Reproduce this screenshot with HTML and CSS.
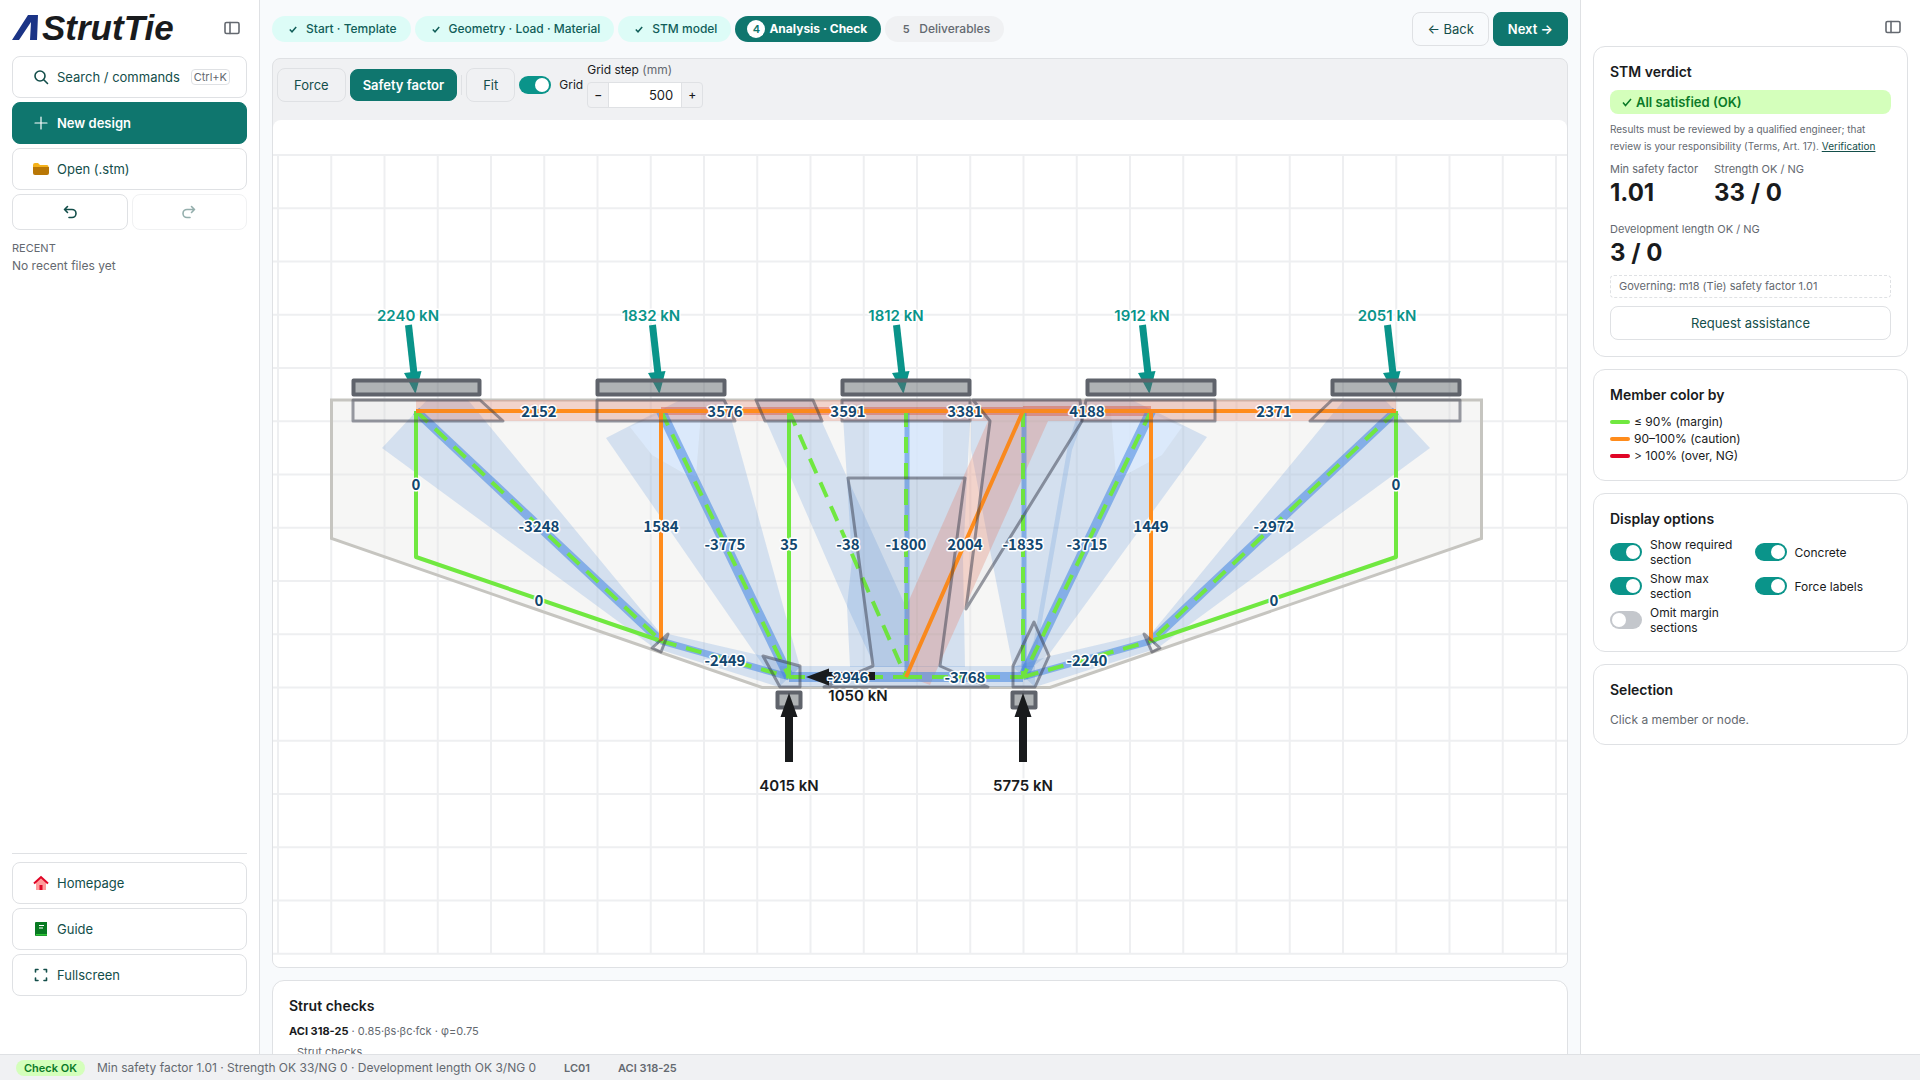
FILE: index.html
```html
<!DOCTYPE html>
<html lang="en">
<head>
<meta charset="utf-8">
<meta name="viewport" content="width=device-width, initial-scale=1">
<title>AStrutTie</title>
<link rel="stylesheet" href="styles.css">
</head>
<body>
<div class="app">
  <aside class="sidebar">
    <div class="brand">
      <svg class="logo" width="172" height="40" viewBox="0 -4 172 40" role="img" aria-label="AStrutTie">
        <path d="M0 28 16 3h10l-1 25h-7l1-18L7 28z" fill="#1b3486"/>
        <text x="30" y="28" class="logo-text">StrutTie</text>
      </svg>
      <button class="icon-btn" aria-label="Collapse sidebar">
        <svg width="16" height="14" viewBox="0 0 16 14"><rect x="1" y="1.500" width="14" height="11" rx="1.500"/><path d="M6 1.500v11"/></svg>
      </button>
    </div>
    <nav class="side-nav">
      <button class="btn side-btn"><svg class="ico" width="16" height="16" viewBox="0 0 16 16"><circle cx="7" cy="7" r="5"/><path d="m11 11 3.500 3.500"/></svg>Search / commands<kbd>Ctrl+K</kbd></button>
      <button class="btn side-btn primary"><svg class="ico thin" width="16" height="16" viewBox="0 0 16 16"><path d="M8 2v12M2 8h12"/></svg>New design</button>
      <button class="btn side-btn"><svg width="16" height="16" viewBox="0 0 16 16"><path d="M0 4q0-2 2-2h3l2 2h7q1.500 0 1.500 1.500V7H0z" fill="#f5b21b"/><path d="M0 6h16v6q0 2-2 2H2q-2 0-2-2z" fill="#b97706"/></svg>Open (.stm)</button>
      <div class="history">
        <button class="btn" aria-label="Undo"><svg class="ico" width="14" height="14" viewBox="0 0 14 14"><path d="M4.500 1.500 1.500 4.500l3 3M1.500 4.500H9a4 4 0 0 1 0 8H6"/></svg></button>
        <button class="btn" aria-label="Redo" disabled><svg class="ico" width="14" height="14" viewBox="0 0 14 14"><path d="m9.500 1.500 3 3-3 3M12.500 4.500H5a4 4 0 0 0 0 8h3"/></svg></button>
      </div>
    </nav>
    <div class="recent"><h2>RECENT</h2><p>No recent files yet</p></div>
    <nav class="side-nav side-foot">
      <a class="btn side-btn" href="#home"><svg width="16" height="16" viewBox="0 0 16 16"><path d="M3 7l5-5 5 5v8H3z" fill="#ff9c9c"/><path d="M1 8.500 8 2l7 6.500" fill="none" stroke="#e00526" stroke-width="2"/><path d="M6.500 10h3v5h-3z" fill="#e00526"/></svg>Homepage</a>
      <a class="btn side-btn" href="#guide"><svg width="16" height="16" viewBox="0 0 16 16"><path d="M2 2q0-1 1-1h11v14H3q-1 0-1-1z" fill="#087a22"/><path d="M3 13h11v1.500H3z" fill="#2fc437"/><path d="M6 4.500h5M6 7h4" stroke="#fff" stroke-width="1.200"/></svg>Guide</a>
      <button class="btn side-btn"><svg class="ico" width="16" height="16" viewBox="0 0 16 16"><path d="M2.500 5V2.500H5M11 2.500h2.500V5M13.500 11v2.500H11M5 13.500H2.500V11"/></svg>Fullscreen</button>
    </nav>
  </aside>

  <main class="main">
    <header class="topbar">
      <ol class="steps">
        <li class="done"><span><svg width="8" height="7" viewBox="0 0 8 7"><path d="M.8 3.500 3 5.800 7.200 1"/></svg></span>Start · Template</li>
        <li class="done"><span><svg width="8" height="7" viewBox="0 0 8 7"><path d="M.8 3.500 3 5.800 7.200 1"/></svg></span>Geometry · Load · Material</li>
        <li class="done"><span><svg width="8" height="7" viewBox="0 0 8 7"><path d="M.8 3.500 3 5.800 7.200 1"/></svg></span>STM model</li>
        <li class="current" aria-current="step"><span>4</span>Analysis · Check</li>
        <li><span>5</span>Deliverables</li>
      </ol>
      <div class="pager"><button class="btn">← Back</button><button class="btn primary">Next →</button></div>
    </header>

    <section class="viewer">
      <div class="toolbar">
        <button class="btn">Force</button>
        <button class="btn primary">Safety factor</button>
        <span class="divider"></span>
        <button class="btn">Fit</button>
        <label class="switch"><input type="checkbox" checked>Grid</label>
        <div class="grid-step">
          <label for="step">Grid step <span>(mm)</span></label>
          <div class="stepper"><button aria-label="Decrease">−</button><input id="step" type="text" value="500"><button aria-label="Increase">+</button></div>
        </div>
      </div>
      <div class="canvas">
      <svg class="drawing" viewBox="273 120 1294 847" role="img" aria-label="Strut and tie model">
        <defs>
          <g id="load"><path d="M408.500 325 414 374" stroke="#0a948a" stroke-width="7"/><path d="M404 373 421.500 371 415.500 394z" fill="#0a948a"/></g>
          <g id="reaction"><path d="M789 762V714" stroke="#191b1d" stroke-width="8"/><path d="M789 693 780.500 717h17z" fill="#191b1d"/></g>
        </defs>
        <path class="grid-line" d="M273 155H1567M273 208.250H1567M273 261.500H1567M273 314.750H1567M273 368H1567M273 421.250H1567M273 474.500H1567M273 527.750H1567M273 581H1567M273 634.250H1567M273 687.500H1567M273 740.750H1567M273 794H1567M273 847.250H1567M273 900.500H1567M273 953.750H1567"/>
        <path class="grid-line" d="M278 155V954M331.250 155V954M384.500 155V954M437.750 155V954M491 155V954M544.250 155V954M597.500 155V954M650.750 155V954M704 155V954M757.250 155V954M810.500 155V954M863.750 155V954M917 155V954M970.250 155V954M1023.500 155V954M1076.750 155V954M1130 155V954M1183.250 155V954M1236.500 155V954M1289.750 155V954M1343 155V954M1396.250 155V954M1449.500 155V954M1502.750 155V954M1556 155V954"/>
        <path class="concrete" d="M331.500 400H1481.500V538.500L1050 687.500H762L331.500 538.500z"/>

        <g class="strut-max">
          <path d="M382 448 427 400H468L662 635 653 647z"/>
          <path d="M606 438 680 400H726L800 667 789 680 765 668z"/>
          <path d="M757 400H812L906 607V667H875L847 606z"/>
          <path d="M842 400H971L963 560 965 667H850L847 606 852 560z"/>
          <path d="M971 400H1082V423L1072 450 1034 667H1013L988 540 971 450z"/>
          <path d="M1082 400H1132L1207 437 1050 653 1020 677 1034 640 1068 445z"/>
          <path d="M1430 448 1385 400H1344L1150 635 1159 647z"/>
          <path d="M668 634 763 656 800 667 779 687 661 650z"/>
          <path d="M1144 634 1050 656 1013 667 1035 687 1152 650z"/>
          <path d="M780 666H1035V687H780z"/>
        </g>
        <g class="node-light">
          <path d="M630 427 661 413H701L696 476 685 474 652 455z"/>
          <path d="M869 421H943V477H869z"/>
          <path d="M1182 427 1151 413H1111L1116 476 1127 474 1162 455z"/>
        </g>
        <g class="tie-max">
          <path d="M416 400H1396V421H416z"/>
          <path d="M906 607 988 421H1048L930 685 906 676z"/>
        </g>
        <path class="tie-need" d="M661 407H1023V415H661zM1023 406H1151V416H1023z"/>
        <g class="strut-need">
          <path d="M416 411 661 641M1396 411 1151 641" stroke-width="9"/>
          <path d="M661 411 789 677M1151 411 1023 677M789 677H1023" stroke-width="10"/>
          <path d="M661 641 789 677M1151 641 1023 677" stroke-width="7"/>
          <path d="M907 411V677M1024 411V677" stroke-width="5"/>
        </g>

        <path class="support" d="M777.500 692.500h23v15h-23zM1012.500 692.500h23v15h-23z"/>
        <g class="ok">
          <path d="M416 411V557L661 641M1396 411V557L1151 641M789 411V677"/>
          <path stroke-dasharray="16 10" d="M416 411 661 641M661 411 789 677M789 411 906 677M906 411V677M1023 411V677M1151 411 1023 677M1396 411 1151 641M661 641 789 677M1023 677 1151 641M789 677H906M906 677H1023"/>
        </g>
        <path class="caution" d="M416 411H1396M661 411V641M1151 411V641M906 677 1023 411"/>
        <g class="node">
          <path d="M353 400H480L503 421H353z"/>
          <path d="M597 400H724L735 421H597z"/>
          <path d="M756 400H813L822 421H765z"/>
          <path d="M842 400H970V421H842z"/>
          <path d="M973 400H1080L1082 421 966 609 990 421z"/>
          <path d="M1086 400H1215V421H1082z"/>
          <path d="M1332 400H1460V421H1310z"/>
          <path d="M848 478H965L940 666 988 687H824L873 666z"/>
          <path d="M763 656 800 666V687H780z"/>
          <path d="M1034 622 1049 656 1035 687H1013V666z"/>
          <path d="M668 634 661 652 652 648 661 640z"/>
          <path d="M1144 634 1152 652 1160 648 1151 640z"/>
        </g>
        <use href="#load"/><use href="#load" x="244"/><use href="#load" x="488"/><use href="#load" x="734"/><use href="#load" x="979"/>
        <use href="#reaction"/><use href="#reaction" x="234"/>
        <path d="M875 676H826" stroke="#191b1d" stroke-width="8"/><path d="M806 677 829 668.500v17z" fill="#191b1d"/>
        <path class="plate" d="M353.500 380.500h126v14h-126zM597.500 380.500h127v14h-127zM842.500 380.500h127v14h-127zM1087.500 380.500h127v14h-127zM1332.500 380.500h127v14h-127z"/>

        <g class="load-label">
          <text x="408" y="321">2240 kN</text><text x="651" y="321">1832 kN</text><text x="896" y="321">1812 kN</text><text x="1142" y="321">1912 kN</text><text x="1387" y="321">2051 kN</text>
        </g>
        <g class="load-label dark">
          <text x="858" y="701">1050 kN</text><text x="789" y="791">4015 kN</text><text x="1023" y="791">5775 kN</text>
        </g>
        <g class="force-label">
          <text x="539" y="417">2152</text><text x="725" y="417">3576</text><text x="848" y="417">3591</text><text x="965" y="417">3381</text><text x="1087" y="417">4188</text><text x="1274" y="417">2371</text>
          <text x="416" y="490">0</text><text x="1396" y="490">0</text>
          <text x="539" y="532">-3248</text><text x="661" y="532">1584</text><text x="1151" y="532">1449</text><text x="1274" y="532">-2972</text>
          <text x="725" y="550">-3775</text><text x="789" y="550">35</text><text x="848" y="550">-38</text><text x="906" y="550">-1800</text><text x="965" y="550">2004</text><text x="1023" y="550">-1835</text><text x="1087" y="550">-3715</text>
          <text x="539" y="606">0</text><text x="1274" y="606">0</text>
          <text x="725" y="666">-2449</text><text x="1087" y="666">-2240</text><text x="848" y="683">-2946</text><text x="965" y="683">-3768</text>
        </g>
      </svg>
      </div>
    </section>

    <section class="card checks">
      <h2>Strut checks</h2>
      <p class="basis"><strong>ACI 318-25</strong> · 0.85·βs·βc·fck · φ=0.75</p>
      <table><caption>Strut checks</caption></table>
    </section>
  </main>

  <aside class="panel">
    <div class="panel-head"><button class="icon-btn" aria-label="Collapse panel"><svg width="16" height="14" viewBox="0 0 16 14"><rect x="1" y="1.500" width="14" height="11" rx="1.500"/><path d="M6 1.500v11"/></svg></button></div>
    <section class="card">
      <h2>STM verdict</h2>
      <div class="verdict"><svg width="10" height="9" viewBox="0 0 10 9"><path d="M1 4.500 3.500 7.500 9 1"/></svg>All satisfied (OK)</div>
      <p class="note">Results must be reviewed by a qualified engineer; that review is your responsibility (Terms, Art. 17). <a href="#verification">Verification</a></p>
      <dl class="metrics">
        <div><dt>Min safety factor</dt><dd>1.01</dd></div>
        <div><dt>Strength OK / NG</dt><dd>33 / 0</dd></div>
        <div><dt>Development length OK / NG</dt><dd>3 / 0</dd></div>
      </dl>
      <p class="governing">Governing: m18 (Tie) safety factor 1.01</p>
      <button class="btn wide">Request assistance</button>
    </section>
    <section class="card">
      <h2>Member color by</h2>
      <ul class="legend"><li class="l-ok">≤ 90% (margin)</li><li class="l-caution">90–100% (caution)</li><li class="l-over">&gt; 100% (over, NG)</li></ul>
    </section>
    <section class="card">
      <h2>Display options</h2>
      <div class="options">
        <label class="switch"><input type="checkbox" checked>Show required section</label>
        <label class="switch"><input type="checkbox" checked>Concrete</label>
        <label class="switch"><input type="checkbox" checked>Show max section</label>
        <label class="switch"><input type="checkbox" checked>Force labels</label>
        <label class="switch"><input type="checkbox">Omit margin sections</label>
      </div>
    </section>
    <section class="card">
      <h2>Selection</h2>
      <p class="empty">Click a member or node.</p>
    </section>
  </aside>

  <footer class="status">
    <span class="badge">Check OK</span>
    <span class="summary">Min safety factor 1.01 · Strength OK 33/NG 0 · Development length OK 3/NG 0</span>
    <strong>LC01</strong><strong>ACI 318-25</strong>
  </footer>
</div>
</body>
</html>
```
FILE: styles.css
```css
:root {
  --teal: #0f766e;
  --teal-bright: #0a948a;
  --ink: #191b1d;
  --muted: #646970;
  --line: #dfe1e4;
  --deep: #134e4a;
}
* { box-sizing: border-box; }
body {
  margin: 0;
  font: 12px/16px Inter, sans-serif;
  color: var(--ink);
  background: #fff;
}
h2, p, ul, ol, dl, dd { margin: 0; padding: 0; }
ul, ol { list-style: none; }
button, input { font: inherit; color: inherit; }

.app {
  display: grid;
  grid-template: minmax(0, 1fr) 26px / 260px minmax(0, 1fr) 340px;
  height: 100vh;
}

.btn {
  display: flex;
  align-items: center;
  justify-content: center;
  height: 34px;
  padding: 0 16px;
  border: 1px solid var(--line);
  border-radius: 8px;
  background: none;
  color: var(--deep);
  font-size: 13px;
  text-decoration: none;
  white-space: nowrap;
}
.btn.primary {
  border-color: var(--teal);
  background: var(--teal);
  color: #fff;
  font-weight: 600;
}
.btn:disabled { opacity: .45; }
.ico, .icon-btn svg {
  fill: none;
  stroke: currentColor;
  stroke-width: 1.6;
  stroke-linecap: round;
  stroke-linejoin: round;
}
.ico.thin { stroke-width: 1.2; }
.icon-btn {
  display: flex;
  padding: 0;
  border: 0;
  background: none;
  color: var(--muted);
}

/* Sidebar */
.sidebar {
  display: flex;
  flex-direction: column;
  padding: 12px 12px 58px;
  border-right: 1px solid var(--line);
}
.brand {
  display: flex;
  align-items: center;
  justify-content: space-between;
  height: 32px;
  padding-right: 7px;
  margin-bottom: 12px;
}
.logo-text {
  font: italic bold 35px "Liberation Sans", Arial, sans-serif;
  fill: var(--ink);
}
.side-nav { display: flex; flex-direction: column; gap: 4px; }
.side-btn {
  justify-content: flex-start;
  gap: 8px;
  height: 42px;
  padding: 0 16px 0 20px;
}
kbd {
  margin-left: auto;
  padding: 0 2px;
  border: 1px solid var(--line);
  border-radius: 4px;
  font: 11px/14px Inter, sans-serif;
  color: var(--muted);
}
.history { display: grid; grid-template-columns: 1fr 1fr; gap: 4px; }
.history .btn { height: 36px; }
.recent { margin-top: 10px; color: var(--muted); }
.recent h2 { font-size: 11px; font-weight: 400; line-height: 16px; }
.recent p { line-height: 20px; }
.side-foot { margin-top: auto; padding-top: 8px; border-top: 1px solid var(--line); }

/* Main column */
.main {
  display: flex;
  flex-direction: column;
  gap: 12px;
  padding: 12px;
  overflow: hidden;
  background: #f8fafc;
}
.main > * { flex: none; }
.topbar { display: flex; justify-content: space-between; height: 34px; }
.topbar .btn { padding: 0 14px; }
.steps { display: flex; align-items: center; gap: 4px; }
.steps li {
  display: flex;
  align-items: center;
  gap: 4px;
  height: 26px;
  padding: 0 14px 0 12px;
  border-radius: 13px;
  background: #f0f1f3;
  color: var(--muted);
  font-weight: 500;
}
.steps span {
  display: flex;
  align-items: center;
  justify-content: center;
  width: 18px;
  height: 18px;
  border-radius: 50%;
  font-size: 11px;
  font-weight: 600;
}
.steps .done { background: #ddfcf7; color: #115e59; }
.steps .current { background: var(--teal); color: #fff; font-weight: 700; }
.steps .current span { background: #fff; color: var(--teal); }
.steps svg, .verdict svg { fill: none; stroke: currentColor; stroke-width: 1.5; }
.pager { display: flex; gap: 4px; }

.viewer {
  border: 1px solid var(--line);
  border-radius: 8px;
  background: #f0f1f3;
  overflow: hidden;
}
.toolbar {
  display: flex;
  align-items: center;
  gap: 4px;
  height: 61px;
  padding: 0 4px 10px;
}
.toolbar .primary { height: 32px; padding: 0 12px; }
.divider { width: 1px; height: 20px; background: var(--line); }
.switch { display: flex; align-items: center; gap: 8px; line-height: 15px; }
.switch input {
  flex: none;
  display: flex;
  align-items: center;
  width: 32px;
  height: 18px;
  margin: 0;
  padding: 2px;
  border-radius: 9px;
  background: #c4c7cc;
  appearance: none;
}
.switch input::before {
  content: "";
  width: 14px;
  height: 14px;
  border-radius: 50%;
  background: #fff;
}
.switch input:checked { justify-content: flex-end; background: var(--teal-bright); }
.grid-step { display: flex; flex-direction: column; gap: 4px; }
.grid-step span { color: var(--muted); }
.stepper {
  display: flex;
  width: 116px;
  height: 26px;
  border: 1px solid var(--line);
  border-radius: 4px;
  overflow: hidden;
}
.stepper button { width: 20px; padding: 0; border: 0; background: none; font-weight: 500; }
.stepper input {
  flex: 1;
  min-width: 0;
  padding: 0 8px;
  border: solid var(--line);
  border-width: 0 1px;
  background: #fff;
  font-size: 13px;
  text-align: right;
}
.canvas { border-radius: 8px 8px 0 0; background: #fff; overflow: hidden; }
.drawing { display: block; width: 100%; height: auto; }

/* Drawing */
.grid-line { fill: none; stroke: #eeeff1; stroke-width: 2; }
.concrete { fill: rgba(230, 230, 225, .35); stroke: #c6c5c0; stroke-width: 3; }
.strut-max { fill: rgba(80, 138, 215, .2); }
.node-light { fill: rgba(222, 236, 255, .75); }
.tie-max { fill: rgba(232, 130, 105, .3); }
.tie-need { fill: rgba(220, 70, 45, .4); }
.strut-need { fill: none; stroke: rgba(70, 135, 225, .56); }
.ok { fill: none; stroke: #70e840; stroke-width: 4; stroke-linejoin: round; }
.caution { fill: none; stroke: #ff8c1c; stroke-width: 4; }
.node { fill: rgba(60, 70, 85, .03); stroke: rgba(55, 60, 75, .5); stroke-width: 3; stroke-linejoin: round; }
.plate, .support { fill: rgba(95, 103, 107, .5); stroke: #5f636b; stroke-width: 4; stroke-linejoin: round; }
.load-label { font: 600 15px Inter, sans-serif; fill: var(--teal-bright); }
.load-label.dark { fill: var(--ink); }
.force-label { font: 700 15px "Noto Sans CJK KR", sans-serif; fill: #12476f; }
.load-label, .force-label {
  text-anchor: middle;
  stroke: #fff;
  stroke-width: 3px;
  stroke-linejoin: round;
  paint-order: stroke;
}

/* Cards */
.card { padding: 16px; border: 1px solid var(--line); border-radius: 12px; background: #fff; }
.card h2 { margin-bottom: 10px; font-size: 14px; font-weight: 600; line-height: 17px; }
.basis { font-size: 11px; line-height: 14px; color: var(--muted); }
.basis strong { color: var(--ink); }
.checks table { margin-top: 6px; color: var(--muted); font-size: 11px; }
.checks caption { padding-left: 8px; white-space: nowrap; }

/* Right panel */
.panel {
  display: flex;
  flex-direction: column;
  gap: 12px;
  padding: 12px;
  border-left: 1px solid var(--line);
  overflow: hidden;
}
.panel-head { display: flex; justify-content: flex-end; padding: 8px 7px 0; }
.verdict {
  display: flex;
  align-items: center;
  gap: 4px;
  height: 24px;
  padding: 0 12px;
  border-radius: 8px;
  background: #d4ffbb;
  color: #0b7a28;
  font-size: 13px;
  font-weight: 600;
}
.note { margin-top: 7px; color: var(--muted); font-size: 10px; line-height: 17px; }
.note a { color: var(--deep); }
.metrics { display: flex; flex-wrap: wrap; gap: 12px 16px; margin-top: 7px; }
.metrics dt { color: var(--muted); font-size: 11px; line-height: 14px; }
.metrics dd { font-size: 24px; font-weight: 700; line-height: 34px; }
.governing {
  margin: 5px 0 8px;
  padding: 0 8px;
  border: 1px dashed var(--line);
  border-radius: 4px;
  color: var(--muted);
  font-size: 11px;
  line-height: 21px;
}
.wide { width: 100%; }
.legend li { display: flex; align-items: center; gap: 4px; line-height: 17px; }
.legend li::before { content: ""; width: 20px; height: 4px; border-radius: 2px; background: #70e840; }
.legend .l-caution::before { background: #ff8c1c; }
.legend .l-over::before { background: #e00526; }
.options { display: grid; grid-template-columns: 1fr 1fr; gap: 4px 8px; }
.empty { color: var(--muted); padding-top: 4px; }

/* Status bar */
.status {
  grid-column: 1 / -1;
  display: flex;
  align-items: center;
  padding: 0 16px;
  border-top: 1px solid var(--line);
  background: #f0f1f3;
  color: var(--muted);
}
.badge {
  margin-right: 12px;
  padding: 0 8px;
  border-radius: 8px;
  background: #d4ffbb;
  color: #0b7a28;
  font-size: 11px;
  font-weight: 600;
}
.status strong { margin-left: 28px; font-size: 11px; font-weight: 600; }
```
